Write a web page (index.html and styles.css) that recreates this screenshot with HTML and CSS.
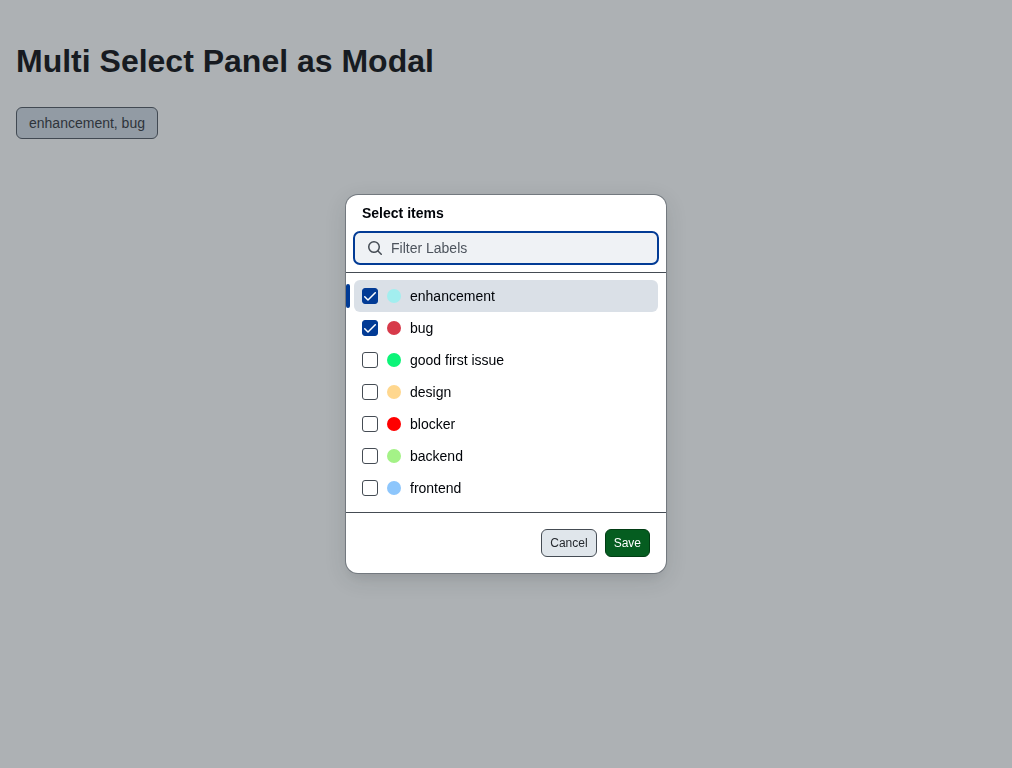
FILE: index.html
```html
<!DOCTYPE html>
<html lang="en">
<head>
<meta charset="utf-8">
<title>Multi Select Panel as Modal</title>
<link rel="stylesheet" href="styles.css">
</head>
<body>
<main class="page">
  <h1 class="title">Multi Select Panel as Modal</h1>
  <button class="anchor" type="button">enhancement, bug</button>
</main>
<div class="backdrop">
  <section class="dialog" role="dialog" aria-label="Select items">
    <h2 class="heading">Select items</h2>
    <div class="filter">
      <svg class="search" viewBox="0 0 16 16" width="16" height="16"><path d="M10.68 11.74a6 6 0 0 1-7.922-8.982 6 6 0 0 1 8.982 7.922l3.04 3.04a.749.749 0 0 1-.326 1.275.749.749 0 0 1-.734-.215ZM11.5 7a4.499 4.499 0 1 0-8.997 0A4.499 4.499 0 0 0 11.5 7Z"/></svg>
      <span>Filter Labels</span>
    </div>
    <ul class="list">
      <li class="item active"><span class="box checked"><svg viewBox="0 0 12 9" width="12" height="9"><path d="M11.78.22a.75.75 0 0 1 0 1.061L4.52 8.541a.75.75 0 0 1-1.062 0L.202 5.285a.75.75 0 0 1 1.061-1.061l2.725 2.723L10.718.22a.75.75 0 0 1 1.062 0Z"/></svg></span><span class="dot aqua"></span>enhancement</li>
      <li class="item"><span class="box checked"><svg viewBox="0 0 12 9" width="12" height="9"><path d="M11.78.22a.75.75 0 0 1 0 1.061L4.52 8.541a.75.75 0 0 1-1.062 0L.202 5.285a.75.75 0 0 1 1.061-1.061l2.725 2.723L10.718.22a.75.75 0 0 1 1.062 0Z"/></svg></span><span class="dot crimson"></span>bug</li>
      <li class="item"><span class="box"></span><span class="dot green"></span>good first issue</li>
      <li class="item"><span class="box"></span><span class="dot amber"></span>design</li>
      <li class="item"><span class="box"></span><span class="dot red"></span>blocker</li>
      <li class="item"><span class="box"></span><span class="dot lime"></span>backend</li>
      <li class="item"><span class="box"></span><span class="dot blue"></span>frontend</li>
    </ul>
    <footer class="footer">
      <button class="btn" type="button">Cancel</button>
      <button class="btn primary" type="button">Save</button>
    </footer>
  </section>
</div>
</body>
</html>
```

FILE: styles.css
```css
* { box-sizing: border-box; }
body { margin: 0; background: #adb1b4; color: #010409; font: 14px/20px "Liberation Sans", Arial, sans-serif; }
.page { padding: 40px 16px; }
.title { margin: 0 0 24px; font-size: 32px; line-height: 43px; font-weight: 700; color: #171b21; }
.anchor { display: block; height: 32px; padding: 0 12px; border: 1px solid #414952; border-radius: 6px; background: #929ba4; color: #2e343b; font: inherit; }
.backdrop { position: fixed; inset: 0; display: flex; align-items: center; justify-content: center; }
.dialog { width: 320px; height: 378px; display: flex; flex-direction: column; background: #fff; border-radius: 12px; box-shadow: 0 0 0 1px #73797f, 0 8px 8px -4px rgba(37, 41, 46, 0.06), 0 6px 22px rgba(37, 41, 46, 0.14); }
.heading { margin: 0; padding: 8px 16px; font-size: 14px; line-height: 20px; }
.filter { display: flex; align-items: center; gap: 8px; height: 32px; margin: 1px 8px 8px; padding: 0 13px; border-radius: 6px; background: #eff2f5; outline: 2px solid #023b95; outline-offset: -1px; color: #4d545d; }
.search { fill: #454c54; }
.list { list-style: none; margin: 0; padding: 7px 8px 8px; border-top: 1px solid #454c54; border-bottom: 1px solid #454c54; }
.item { position: relative; display: flex; align-items: center; height: 32px; padding: 0 8px; border-radius: 6px; }
.active { background: #dae0e7; }
.active::before { content: ""; position: absolute; left: -8px; top: 4px; width: 4px; height: 24px; border-radius: 6px; background: #023b95; }
.box { display: flex; align-items: center; justify-content: center; width: 16px; height: 16px; border: 1px solid #454c54; border-radius: 3px; background: #fff; }
.checked { padding-top: 1px; background: #023b95; border-color: #023b95; }
.box svg { fill: #fff; flex: none; }
.dot { width: 14px; height: 14px; margin: 0 9px; border-radius: 50%; }
.aqua { background: #a2eeef; }
.crimson { background: #d73a4a; }
.green { background: #0cf478; }
.amber { background: #ffd78e; }
.red { background: #f00; }
.lime { background: #a4f287; }
.blue { background: #8dc6fc; }
.footer { display: flex; justify-content: flex-end; gap: 8px; padding: 16px; }
.btn { height: 28px; padding: 0 8px; border: 1px solid #454c54; border-radius: 6px; background: #e0e6eb; color: #25292e; font: 12px/20px "Liberation Sans", Arial, sans-serif; }
.primary { background: #055d20; border-color: #013d14; color: #fff; }
```
